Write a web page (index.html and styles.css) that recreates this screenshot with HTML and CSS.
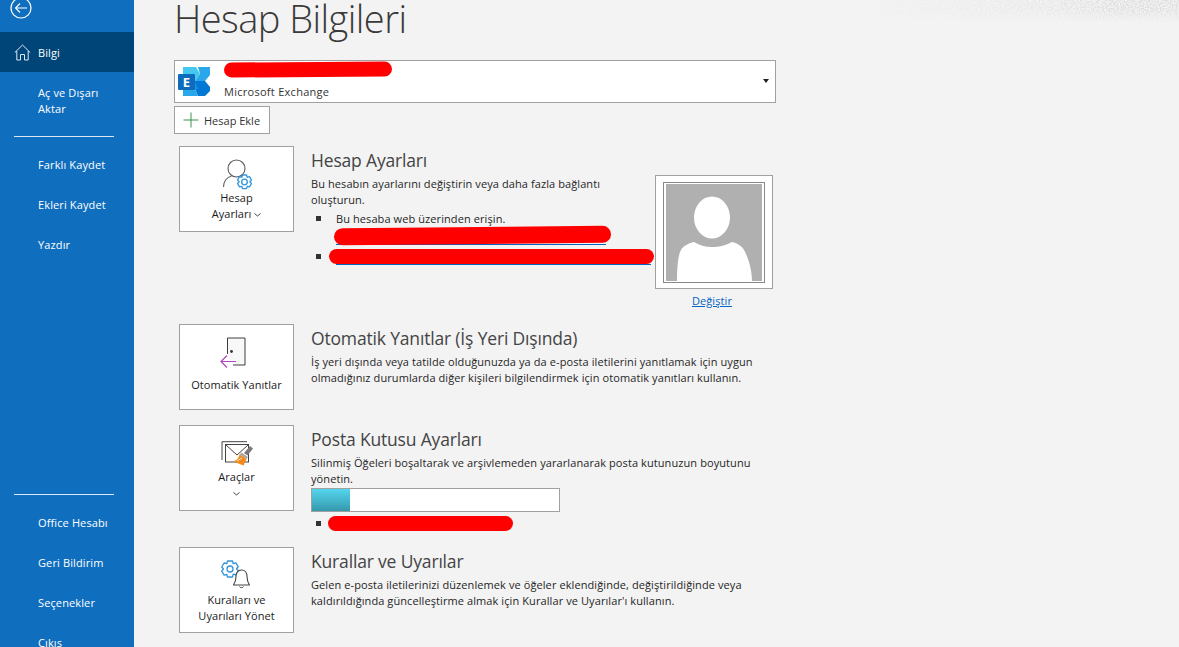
FILE: index.html
```html
<!DOCTYPE html>
<html lang="tr">
<head>
<meta charset="utf-8">
<title>Hesap Bilgileri</title>
<link rel="stylesheet" href="styles.css">
</head>
<body>
<div class="app">
  <nav class="sidebar">
    <div class="back">
      <svg width="22" height="22" viewBox="0 0 22 22"><circle cx="11" cy="11" r="10" fill="none" stroke="#fff" stroke-width="1.2"/><path d="M17 11H5.5M10 6.5 5.5 11l4.500 4.500" fill="none" stroke="#fff" stroke-width="1.100"/></svg>
    </div>
    <a class="nav-item active">
      <svg class="home" width="17" height="17" viewBox="0 0 17 17"><path d="M.8 8.500 8.500 1l7.700 7.500M2.800 7v9h3.700v-5.500h4V16h3.700V7" fill="none" stroke="#dce9f5" stroke-width="1"/></svg>
      Bilgi
    </a>
    <a class="nav-item tall">Aç ve Dışarı<br>Aktar</a>
    <div class="nav-sep"></div>
    <a class="nav-item">Farklı Kaydet</a>
    <a class="nav-item">Ekleri Kaydet</a>
    <a class="nav-item">Yazdır</a>
    <div class="nav-sep bottom"></div>
    <a class="nav-item">Office Hesabı</a>
    <a class="nav-item">Geri Bildirim</a>
    <a class="nav-item">Seçenekler</a>
    <a class="nav-item">Çıkış</a>
  </nav>

  <main class="main">
    <svg class="noise" width="400" height="24">
      <defs>
        <filter id="grain" x="0" y="0" width="100%" height="100%">
          <feTurbulence type="fractalNoise" baseFrequency="0.7" numOctaves="2" seed="4"/>
          <feColorMatrix values="0 0 0 0 0.62 0 0 0 0 0.62 0 0 0 0 0.62 1.800 0 0 0 -0.65"/>
        </filter>
        <linearGradient id="fadeX" x1="0" y1="0" x2="1" y2="0">
          <stop offset="0.180" stop-color="#000"/>
          <stop offset="0.650" stop-color="#777"/>
          <stop offset="0.850" stop-color="#fff"/>
        </linearGradient>
        <linearGradient id="fadeY" x1="0" y1="0" x2="0" y2="1">
          <stop offset="0.400" stop-color="#000" stop-opacity="0"/>
          <stop offset="0.950" stop-color="#000" stop-opacity="1"/>
        </linearGradient>
        <mask id="fadeMask">
          <rect width="400" height="24" fill="url(#fadeX)"/>
          <rect width="400" height="24" fill="url(#fadeY)"/>
        </mask>
      </defs>
      <rect width="400" height="24" filter="url(#grain)" mask="url(#fadeMask)"/>
    </svg>

    <h1 class="title">Hesap Bilgileri</h1>

    <div class="account">
      <svg class="exch" width="33" height="29" viewBox="0 0 33 29">
        <path d="M5 0h13l4 7-5 7H5z" fill="#45c8f0"/>
        <path d="M20 0h12v8l-5 6H17l5-7z" fill="#28a8ea"/>
        <path d="M17 14h10l5 6v4l-5 5h-7l-3-7z" fill="#0078d4"/>
        <path d="M5 14h12l3 8-3 0H5z" fill="#1490df"/>
        <path d="M5 22h12l3 7H5z" fill="#28a8ea"/>
        <rect x="0" y="7" width="17" height="16" rx="1" fill="#0f6cbd"/>
        <text class="exch-e" x="8.500" y="20" text-anchor="middle">E</text>
      </svg>
      <span class="account-name">Microsoft Exchange</span>
      <span class="caret"></span>
      <i class="redact r-account"></i>
    </div>

    <button class="add-btn">
      <svg width="16" height="16" viewBox="0 0 16 16"><path d="M8 .5v15M.5 8h15" stroke="#3d8f4f" stroke-width="1" fill="none"/></svg>
      Hesap Ekle
    </button>

    <section class="section s1">
      <div class="tile">
        <svg class="ico" width="32" height="32" viewBox="0 0 32 32">
          <circle cx="15.500" cy="9.500" r="8.500" fill="#fff" stroke="#5c5c5c" stroke-width="1.100"/>
          <path d="M2.500 28c0-5 3-9.500 8-11" fill="none" stroke="#5c5c5c" stroke-width="1.100"/>
          <g transform="translate(0 1.500)">
            <path d="M21.500 14.500h4l.7 2.300 2.300-.6 2 3.400-1.700 1.700 1.700 1.700-2 3.400-2.300-.6-.7 2.300h-4l-.7-2.300-2.300.6-2-3.400 1.700-1.700-1.700-1.700 2-3.400 2.300.6z" fill="#fff" stroke="#2f96dc" stroke-width="1.300" stroke-linejoin="round"/>
            <circle cx="23.500" cy="21.500" r="2.800" fill="none" stroke="#2f96dc" stroke-width="1.300"/>
          </g>
        </svg>
        <span class="tile-label">Hesap<br>Ayarları <svg class="chev" width="7" height="4" viewBox="0 0 7 4"><path d="M.5.500l3 2.500 3-2.500" fill="none" stroke="#444"/></svg></span>
      </div>
      <div class="body">
        <h2>Hesap Ayarları</h2>
        <p class="wrap-a">Bu hesabın ayarlarını değiştirin veya daha fazla bağlantı oluşturun.</p>
        <ul class="bullets">
          <li>Bu hesaba web üzerinden erişin.
            <a class="link l1">&nbsp;</a>
            <i class="redact r-l1"></i>
          </li>
          <li class="second"><a class="link l2">&nbsp;</a><i class="redact r-l2"></i></li>
        </ul>
      </div>
      <div class="photo-col">
        <div class="photo">
          <div class="photo-inner">
            <svg width="96" height="97" viewBox="0 0 96 97">
              <rect width="96" height="97" fill="#b0b0b0"/>
              <ellipse cx="46" cy="33.500" rx="18" ry="21" fill="#fff"/>
              <path d="M11 97c0-13 1-26 4-31 2-4 8-7 13-8 5 3 11 5 18 5s15-2 20-5c5 1 10 4 12 8 3 5 8 18 8 31z" fill="#fff"/>
            </svg>
          </div>
        </div>
        <a class="change">Değiştir</a>
      </div>
    </section>

    <section class="section s2">
      <div class="tile">
        <svg class="ico" width="32" height="32" viewBox="0 0 32 32">
          <path d="M6.500 17V1H24v27H12" fill="#f8f8f8" stroke="#3c3c3c" stroke-width="1"/>
          <circle cx="10.500" cy="14.500" r="1.400" fill="#333"/>
          <path d="M15 24.500H0M6 18.500 0 24.500l6 6" fill="none" stroke="#b146c2" stroke-width="1.200"/>
        </svg>
        <span class="tile-label">Otomatik Yanıtlar</span>
      </div>
      <div class="body">
        <h2>Otomatik Yanıtlar (İş Yeri Dışında)</h2>
        <p>İş yeri dışında veya tatilde olduğunuzda ya da e-posta iletilerini yanıtlamak için uygun olmadığınız durumlarda diğer kişileri bilgilendirmek için otomatik yanıtları kullanın.</p>
      </div>
    </section>

    <section class="section s3">
      <div class="tile">
        <svg class="ico" width="32" height="32" viewBox="0 0 32 32">
          <path d="M1 22V3.700h25" fill="none" stroke="#444" stroke-width="1"/>
          <rect x="4.500" y="6.500" width="23" height="17.500" fill="#fff" stroke="#444" stroke-width="1"/>
          <path d="M5 7 16 17 27 7" fill="none" stroke="#444" stroke-width="1"/>
          <path d="M23 15l6-7 3 2.500-5.500 7z" fill="#7a7a7a"/>
          <path d="M20.500 14.500l6.500 4.500-1.500 2-7-4.500z" fill="#a8a8a8"/>
          <path d="M18.500 16.500l7 4.500-3 6.500-9-3.500-0-1.500c2.500 0 4-2.500 5-6z" fill="#f28a1c"/>
          <path d="M16 23l5-3" stroke="#fff" stroke-width=".8"/>
        </svg>
        <span class="tile-label">Araçlar<br><svg class="chev" width="7" height="4" viewBox="0 0 7 4"><path d="M.5.500l3 2.500 3-2.500" fill="none" stroke="#444"/></svg></span>
      </div>
      <div class="body">
        <h2>Posta Kutusu Ayarları</h2>
        <p>Silinmiş Öğeleri boşaltarak ve arşivlemeden yararlanarak posta kutunuzun boyutunu yönetin.</p>
        <div class="quota"><div class="quota-fill"></div></div>
        <ul class="bullets tight"><li><i class="redact r-quota"></i>&nbsp;</li></ul>
      </div>
    </section>

    <section class="section s4">
      <div class="tile">
        <svg class="ico" width="32" height="32" viewBox="0 0 32 32">
          <g transform="translate(-.5 -2)">
            <path d="M7 3h5l.7 2.500 2.700-.7 2.400 4-1.800 2 1.800 2-2.400 4-2.700-.7L12 19H7l-.7-2.500-2.700.7-2.400-4L3 11 1.200 9l2.400-4 2.700.7z" fill="none" stroke="#2f96dc" stroke-width="1.300" stroke-linejoin="round"/>
            <circle cx="9.500" cy="11" r="3" fill="none" stroke="#2f96dc" stroke-width="1.300"/>
          </g>
          <path d="M12.500 25c2-3 2.500-5 2.500-8.500 0-3.500 2-6.500 5.500-6.500s5.500 3 5.500 6.500c0 3.500 .5 5.500 2.500 8.500z" fill="#fff" stroke="#444" stroke-width="1.100" stroke-linejoin="round"/>
          <path d="M18.500 26.500c.5 1.500 3.500 1.500 4 0" fill="none" stroke="#444"/>
        </svg>
        <span class="tile-label t4">Kuralları ve<br>Uyarıları Yönet</span>
      </div>
      <div class="body">
        <h2>Kurallar ve Uyarılar</h2>
        <p>Gelen e-posta iletilerinizi düzenlemek ve öğeler eklendiğinde, değiştirildiğinde veya kaldırıldığında güncelleştirme almak için Kurallar ve Uyarılar'ı kullanın.</p>
      </div>
    </section>
  </main>
</div>
</body>
</html>
```

FILE: styles.css
```css
* { box-sizing: border-box; }
html, body { margin: 0; height: 647px; overflow: hidden; }
body {
  font-family: "Open Sans", "Noto Sans", "Liberation Sans", sans-serif;
  font-size: 11px;
  color: #262626;
  background: #f3f3f3;
}
.app { display: flex; height: 647px; overflow: hidden; }

/* sidebar */
.sidebar {
  width: 134px;
  flex: none;
  background: #106ebe;
  color: #fff;
  display: flex;
  flex-direction: column;
  height: 680px;
}
.back { height: 32px; padding: 0 0 13px 10px; display: flex; align-items: flex-end; }
.back svg { flex: none; }
.nav-item {
  height: 40px;
  flex: none;
  padding-left: 38px;
  display: flex;
  align-items: center;
  font-size: 11px;
  letter-spacing: .12px;
  position: relative;
}
.nav-item.active { background: #004578; }
.home { position: absolute; left: 14px; top: 12px; }
.nav-item.tall { height: 56px; line-height: 16px; padding-top: 2px; }
.nav-sep { height: 1px; flex: none; background: #dce9f5; margin: 8px 20px 7px 14px; }
.nav-sep.bottom { margin-top: 230px; margin-bottom: 7px; }

/* main */
.main { flex: 1; position: relative; padding-left: 40px; min-width: 0; }
.noise { position: absolute; right: 0; top: 0; }
.title {
  margin: 0;
  height: 60px;
  font-size: 38px;
  line-height: 36px;
  font-weight: 300;
  color: #3a3a3a;
  letter-spacing: -.55px;
  white-space: nowrap;
}
.account {
  position: relative;
  width: 602px;
  height: 43px;
  background: #fff;
  border: 1px solid #a0a0a0;
  display: flex;
  align-items: flex-end;
  padding: 0 0 2px 49px;
}
.exch { position: absolute; left: 3px; top: 6px; }
.exch-e { font: bold 13px "Open Sans", sans-serif; fill: #fff; }
.account-name { font-size: 11px; line-height: 16px; color: #333; letter-spacing: .28px; }
.caret {
  position: absolute;
  right: 6px;
  top: 18px;
  border-left: 3.5px solid transparent;
  border-right: 3.500px solid transparent;
  border-top: 4px solid #222;
}
.add-btn {
  display: flex;
  align-items: center;
  gap: 5px;
  width: 96px;
  height: 28px;
  margin-top: 3px;
  padding: 0 0 0 8px;
  background: #fff;
  border: 1px solid #a0a0a0;
  font: 11px "Open Sans", sans-serif;
  color: #333;
  white-space: nowrap;
}
.section { display: flex; margin-left: 5px; gap: 17px; align-items: flex-start; }
.s1 { height: 178px; margin-top: 12px; }
.s2 { height: 101px; }
.s3 { height: 122px; }
.s4 { height: 86px; }
.tile {
  width: 115px;
  height: 86px;
  flex: none;
  background: #fff;
  border: 1px solid #a0a0a0;
  display: flex;
  flex-direction: column;
  align-items: center;
  padding-top: 12px;
}
.ico { flex: none; overflow: visible; }
.tile-label { margin-top: -1px; text-align: center; line-height: 16px; font-size: 11px; color: #1a1a1a; letter-spacing: .05px; white-space: nowrap; }
.s2 .tile-label { margin-top: 8px; }
.tile-label.t4 { margin-top: 0; }
.chev { vertical-align: middle; }
.body { width: 462px; flex: none; position: relative; }
h2 { margin: 2px 0 0; height: 24px; font-size: 17.500px; line-height: 24px; font-weight: 400; color: #444; white-space: nowrap; letter-spacing: -.17px; }
p { margin: 4px 0 0; line-height: 16px; width: 462px; letter-spacing: .09px; }
.wrap-a { width: 310px; }
.bullets { list-style: none; margin: 3px 0 0; padding: 0; }
.bullets li { position: relative; padding-left: 25px; line-height: 16px; letter-spacing: .09px; }
.bullets li::before { content: ""; position: absolute; left: 5px; top: 5px; width: 5px; height: 5px; background: #333; }
.bullets li.second { margin-top: 4px; }
.link { display: block; height: 18px; color: #0563c1; border-bottom: 1px solid #0563c1; }
.l1 { width: 270px; }
.l2 { width: 315px; height: 16px; }
.redact { position: absolute; display: block; background: #f00; border-radius: 9px; }
.r-account { left: 49px; top: 1px; width: 168px; height: 15px; transform: rotate(-.4deg); }
.r-l1 { left: 23px; top: 16px; width: 277px; height: 17px; transform: rotate(-.5deg); }
.r-l2 { left: 18px; top: 0; width: 325px; height: 15px; }
.r-quota { left: 17px; top: 0; width: 185px; height: 15px; }
.photo-col { margin-left: -135px; margin-top: 29px; flex: none; width: 118px; display: flex; flex-direction: column; align-items: center; position: relative; }
.photo { width: 118px; height: 114px; border: 1px solid #a0a0a0; background: #fff; padding: 6px 7px 0; }
.photo-inner { border: 1px solid #888; padding: 1px 2px; height: 101px; width: 102px; overflow: hidden; }
.photo-inner svg { display: block; }
.change { margin: 4px 4px 0 0; color: #0563c1; text-decoration: underline; font-size: 11px; letter-spacing: .1px; }
.quota { width: 249px; height: 24px; margin-top: 1px; background: #fff; border: 1px solid #a0a0a0; }
.quota-fill { width: 38px; height: 100%; background: linear-gradient(#55d6ee, #3498ac); }
.tight { margin-top: 4px; }
```
